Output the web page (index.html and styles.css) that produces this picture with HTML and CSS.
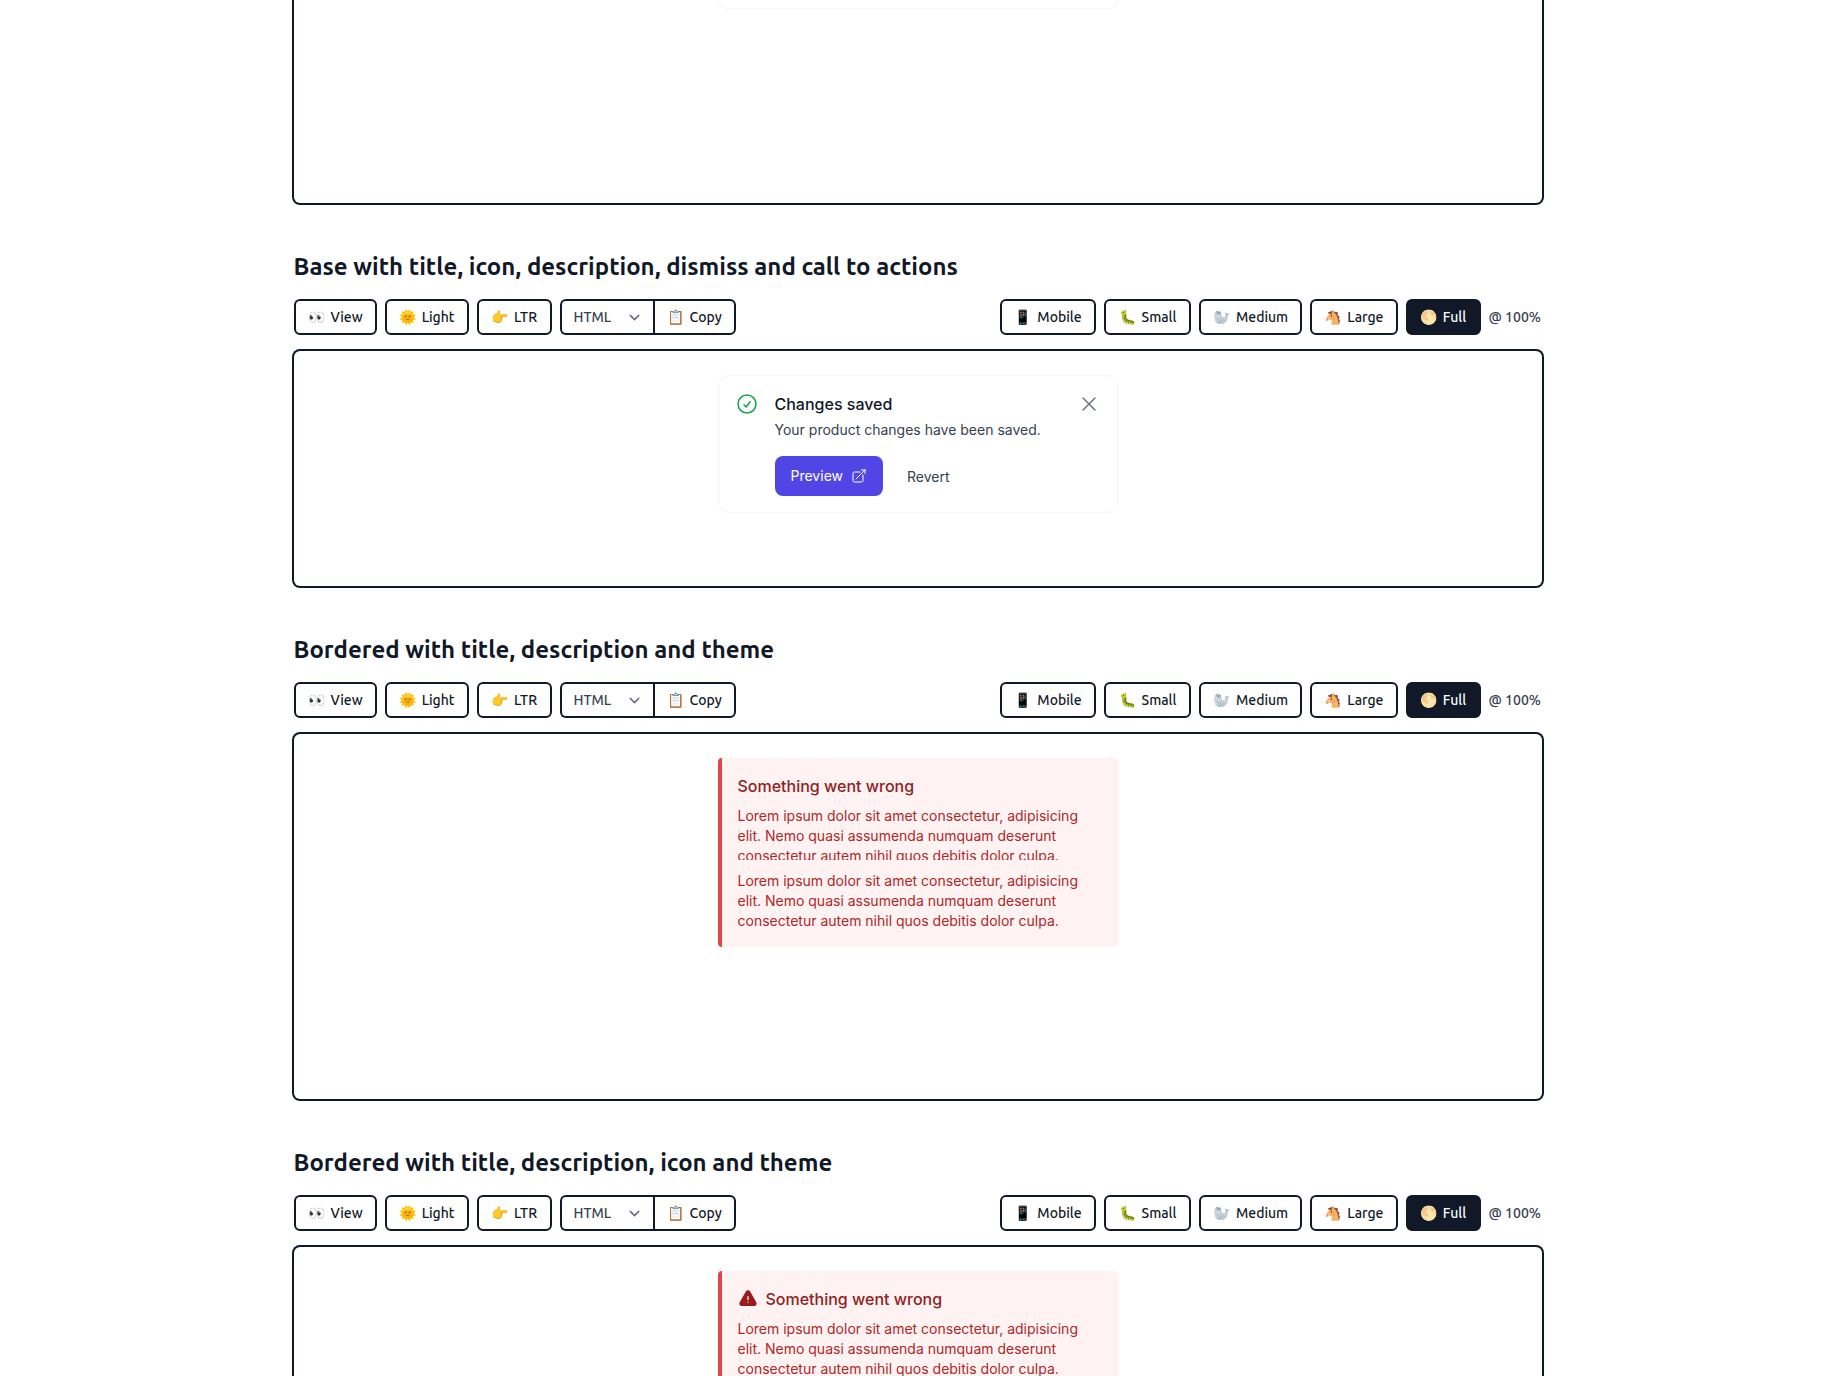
FILE: index.html
```html
<!DOCTYPE html>
<html lang="en">
<head>
<meta charset="utf-8">
<meta name="viewport" content="width=device-width, initial-scale=1">
<title>Alerts</title>
<link rel="stylesheet" href="styles.css">
</head>
<body>
<main class="container">

<section class="example">
  <div class="frame frame--first">
    <div class="alert alert--first"></div>
  </div>
</section>

<section class="example">
  <h2 class="heading">Base with title, icon, description, dismiss and call to actions</h2>
  <div class="toolbar">
    <div class="group">
      <a class="btn" href="#"><span>👀</span>View</a>
      <button class="btn" type="button"><span>🌞</span>Light</button>
      <button class="btn btn--sm" type="button"><span>👉</span>LTR</button>
      <div class="joined">
        <select class="select" aria-label="Code format"><option>HTML</option><option>JSX</option><option>Vue</option></select>
        <button class="btn btn--end" type="button"><span>📋</span>Copy</button>
      </div>
    </div>
    <div class="group">
      <button class="btn btn--lg" type="button"><span>📱</span>Mobile</button>
      <button class="btn btn--md" type="button"><span>🐛</span>Small</button>
      <button class="btn" type="button"><span>🦭</span>Medium</button>
      <button class="btn btn--md" type="button"><span>🐴</span>Large</button>
      <button class="btn btn--sm btn--active" type="button"><span>🌕</span>Full</button>
      <span class="zoom">@ 100%</span>
    </div>
  </div>
  <div class="frame frame--short">
    <div class="alert">
      <svg class="icon-check" viewBox="0 0 24 24" fill="none" stroke="currentColor" stroke-width="1.5" stroke-linecap="round" stroke-linejoin="round"><path d="M9 12.75L11.25 15 15 9.75M21 12a9 9 0 11-18 0 9 9 0 0118 0z"/></svg>
      <div class="alert-body">
        <strong class="alert-title">Changes saved</strong>
        <p class="alert-text">Your product changes have been saved.</p>
        <div class="actions">
          <a class="preview" href="#"><span>Preview</span><svg class="icon-link" viewBox="0 0 24 24" fill="none" stroke="currentColor" stroke-width="1.5" stroke-linecap="round" stroke-linejoin="round"><path d="M13.5 6H5.25A2.25 2.25 0 003 8.25v10.5A2.25 2.25 0 005.25 21h10.5A2.25 2.25 0 0018 18.75V10.5m-10.5 6L21 3m0 0h-5.25M21 3v5.25"/></svg></a>
          <button class="revert" type="button"><span>Revert</span></button>
        </div>
      </div>
      <button class="dismiss" type="button" aria-label="Dismiss popup"><svg viewBox="0 0 24 24" fill="none" stroke="currentColor" stroke-width="1.5" stroke-linecap="round" stroke-linejoin="round"><path d="M6 18L18 6M6 6l12 12"/></svg></button>
    </div>
  </div>
</section>

<section class="example">
  <h2 class="heading">Bordered with title, description and theme</h2>
  <div class="toolbar">
    <div class="group">
      <a class="btn" href="#"><span>👀</span>View</a>
      <button class="btn" type="button"><span>🌞</span>Light</button>
      <button class="btn btn--sm" type="button"><span>👉</span>LTR</button>
      <div class="joined">
        <select class="select" aria-label="Code format"><option>HTML</option><option>JSX</option><option>Vue</option></select>
        <button class="btn btn--end" type="button"><span>📋</span>Copy</button>
      </div>
    </div>
    <div class="group">
      <button class="btn btn--lg" type="button"><span>📱</span>Mobile</button>
      <button class="btn btn--md" type="button"><span>🐛</span>Small</button>
      <button class="btn" type="button"><span>🦭</span>Medium</button>
      <button class="btn btn--md" type="button"><span>🐴</span>Large</button>
      <button class="btn btn--sm btn--active" type="button"><span>🌕</span>Full</button>
      <span class="zoom">@ 100%</span>
    </div>
  </div>
  <div class="frame frame--tall">
    <div class="error" role="alert">
      <strong class="error-title">Something went wrong</strong>
      <p class="error-text error-text--clipped">Lorem ipsum dolor sit amet consectetur, adipisicing elit. Nemo quasi assumenda numquam deserunt consectetur autem nihil quos debitis dolor culpa.</p>
      <p class="error-text">Lorem ipsum dolor sit amet consectetur, adipisicing elit. Nemo quasi assumenda numquam deserunt consectetur autem nihil quos debitis dolor culpa.</p>
    </div>
  </div>
</section>

<section class="example">
  <h2 class="heading">Bordered with title, description, icon and theme</h2>
  <div class="toolbar">
    <div class="group">
      <a class="btn" href="#"><span>👀</span>View</a>
      <button class="btn" type="button"><span>🌞</span>Light</button>
      <button class="btn btn--sm" type="button"><span>👉</span>LTR</button>
      <div class="joined">
        <select class="select" aria-label="Code format"><option>HTML</option><option>JSX</option><option>Vue</option></select>
        <button class="btn btn--end" type="button"><span>📋</span>Copy</button>
      </div>
    </div>
    <div class="group">
      <button class="btn btn--lg" type="button"><span>📱</span>Mobile</button>
      <button class="btn btn--md" type="button"><span>🐛</span>Small</button>
      <button class="btn" type="button"><span>🦭</span>Medium</button>
      <button class="btn btn--md" type="button"><span>🐴</span>Large</button>
      <button class="btn btn--sm btn--active" type="button"><span>🌕</span>Full</button>
      <span class="zoom">@ 100%</span>
    </div>
  </div>
  <div class="frame frame--tall">
    <div class="error" role="alert">
      <div class="error-head">
        <svg class="icon-warning" viewBox="0 0 24 24" fill="currentColor"><path fill-rule="evenodd" clip-rule="evenodd" d="M9.401 3.003c1.155-2 4.043-2 5.197 0l7.355 12.748c1.154 2-.29 4.5-2.599 4.5H4.645c-2.309 0-3.752-2.5-2.598-4.5L9.4 3.003zM12 8.25a.75.75 0 01.75.75v3.75a.75.75 0 01-1.5 0V9a.75.75 0 01.75-.75zm0 8.25a.75.75 0 100-1.5.75.75 0 000 1.5z"/></svg>
        <strong class="error-title">Something went wrong</strong>
      </div>
      <p class="error-text">Lorem ipsum dolor sit amet consectetur, adipisicing elit. Nemo quasi assumenda numquam deserunt consectetur autem nihil quos debitis dolor culpa.</p>
    </div>
  </div>
</section>

</main>
</body>
</html>
```
FILE: styles.css
```css
*, *::before, *::after { box-sizing: border-box; margin: 0; }

body {
  height: 100vh;
  overflow: hidden;
  background: #fff;
  color: #111827;
  font-family: Ubuntu, "Noto Sans", sans-serif;
  font-size: 16px;
  line-height: 24px;
}

button, select { font: inherit; color: inherit; background: none; border: 0; padding: 0; }
a { color: inherit; text-decoration: none; }
svg { display: block; flex: none; }

.container {
  max-width: 1280px;
  margin: 0 auto;
  padding: 0 16px;
  display: flex;
  flex-direction: column;
  gap: 48px;
}

.heading { font-size: 24px; line-height: 32px; font-weight: 700; }

.toolbar {
  display: flex;
  align-items: center;
  justify-content: space-between;
  margin: 16px 0;
}
.group { display: flex; align-items: center; gap: 8px; }
.joined { display: flex; }

.btn {
  display: inline-flex;
  align-items: center;
  justify-content: center;
  gap: 6px;
  height: 36px;
  padding: 0 12px;
  border: 2px solid #111827;
  border-radius: 6px;
  font-size: 14px;
  line-height: 20px;
  font-weight: 500;
  white-space: nowrap;
}
.btn--sm { min-width: 75px; }
.btn--md { min-width: 87px; }
.btn--lg { min-width: 96px; }
.btn--end { border-radius: 0 6px 6px 0; }
.btn--active { background: #111827; color: #fff; }

.select {
  appearance: none;
  width: 93px;
  height: 36px;
  padding: 0 12px;
  border: 2px solid #111827;
  border-right: 0;
  border-radius: 6px 0 0 6px;
  color: #374151;
  font-size: 14px;
  line-height: 20px;
  font-weight: 500;
  background: url("data:image/svg+xml,%3Csvg xmlns='http://www.w3.org/2000/svg' fill='none' viewBox='0 0 20 20'%3E%3Cpath stroke='%236b7280' stroke-linecap='round' stroke-linejoin='round' stroke-width='1.5' d='M6 8l4 4 4-4'/%3E%3C/svg%3E") no-repeat right 8px center / 21px 21px;
}

.zoom { min-width: 53px; color: #374151; font-size: 14px; line-height: 20px; font-weight: 500; }

/* The ring sits outside the frame's content box. */
.frame {
  padding: 24px;
  border-radius: 6px;
  box-shadow: 0 0 0 2px #111827;
  font-family: Inter, sans-serif;
}
.frame--first { min-height: 203px; padding-top: 0; border-radius: 0 0 6px 6px; }
.frame--short { min-height: 235px; }
.frame--tall { min-height: 365px; }

.alert {
  display: flex;
  align-items: flex-start;
  gap: 16px;
  max-width: 400px;
  margin: 0 auto;
  padding: 16px;
  border: 1px solid #f3f4f6;
  border-radius: 12px;
}
.alert--first { height: 9px; padding: 0; border-top: 0; border-radius: 0 0 12px 12px; }
.alert-body { flex: 1; }
.alert-title { display: block; font-weight: 500; }
.alert-text { margin-top: 4px; color: #374151; font-size: 14px; line-height: 20px; }
.icon-check { width: 24px; height: 24px; color: #16a34a; }

.actions { display: flex; gap: 8px; margin-top: 16px; }
.actions span { font-size: 14px; line-height: 20px; }
.preview {
  display: inline-flex;
  align-items: center;
  gap: 8px;
  height: 40px;
  padding: 0 16px;
  border-radius: 8px;
  background: #4f46e5;
  color: #fff;
}
.icon-link { width: 16px; height: 16px; }
.revert { height: 40px; padding: 0 16px; color: #374151; }
.dismiss { width: 24px; height: 24px; color: #6b7280; }

.error {
  max-width: 400px;
  margin: 0 auto;
  padding: 16px;
  border-left: 4px solid #e04848;
  border-radius: 4px;
  background: #fef2f2;
}
.error-head { display: flex; align-items: center; gap: 8px; }
.error-title { display: block; color: #8f2222; font-weight: 500; }
.icon-warning { width: 20px; height: 20px; color: #991b1b; }
.error-text { margin-top: 8px; color: #ae2828; font-size: 14px; line-height: 20px; }
.error-text--clipped { height: 54px; margin-bottom: 11px; overflow: hidden; }
.error-text--clipped + .error-text { margin-top: 0; }
```
